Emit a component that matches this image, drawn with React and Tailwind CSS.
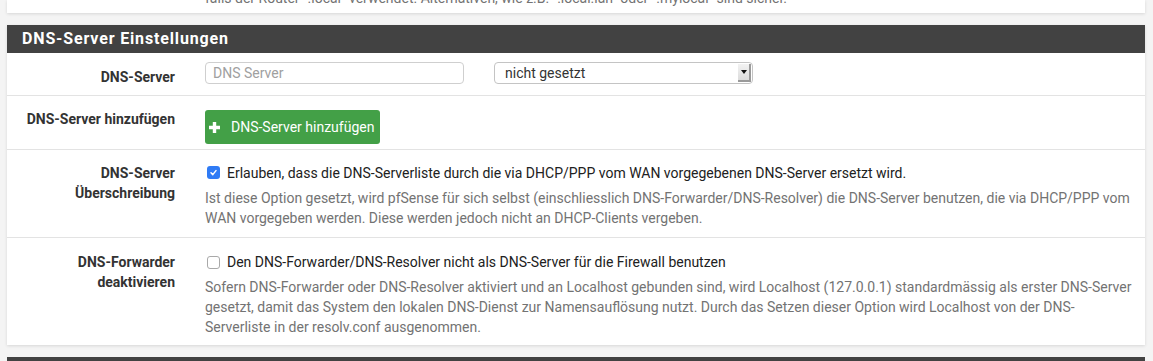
import React from "react";

const font = { fontFamily: "Roboto, 'Noto Sans', Arial, sans-serif" };

function Check({ checked }) {
  if (checked) {
    return (
      <span className="mt-[3px] flex h-[13px] w-[13px] shrink-0 items-center justify-center rounded-[3px] bg-[#2f7bf5]">
        <svg width="9" height="9" viewBox="0 0 9 9">
          <path d="M2 4.8 L3.8 6.6 L7 2.6" fill="none" stroke="#fff" strokeWidth="1.5" strokeLinecap="round" strokeLinejoin="round" />
        </svg>
      </span>
    );
  }
  return <span className="mt-[4px] block h-[13px] w-[13px] shrink-0 rounded-[3px] border border-[#a9a9a9] bg-white" />;
}

function Row({ label, children, className = "" }) {
  return (
    <div className={"flex border-b border-[#e3e3e3] " + className}>
      <div className="w-[183px] shrink-0 pr-[15px] text-right text-[14px] font-bold leading-[20px] text-[#333]">
        {label}
      </div>
      <div className="min-w-0 flex-1 pl-[15px] pr-[10px]">{children}</div>
    </div>
  );
}

export default function App() {
  return (
    <div className="h-[361px] w-[1153px] overflow-hidden bg-[#f4f4f4] pl-[7px] pr-[8px]" style={font}>
      {/* previous panel (cut) */}
      <div className="h-[13px] overflow-hidden bg-white shadow-[0_1px_3px_rgba(0,0,0,0.12)]">
        <div className="mt-[-12px] pl-[198px] text-[14px] leading-[20px] text-[#737373]">
          falls der Router ".local" verwendet. Alternativen, wie z.B. ".local.lan" oder ".mylocal" sind sicher.
        </div>
      </div>

      {/* DNS panel */}
      <div className="mt-[12px] bg-white shadow-[0_1px_3px_rgba(0,0,0,0.12)]">
        <div className="flex h-[28px] items-center bg-[#424242] pl-[15px] text-[16px] font-bold tracking-[0.85px] text-white">
          DNS-Server Einstellungen
        </div>

        <Row label="DNS-Server" className="h-[43px] pt-[14px]">
          <div className="mt-[-5px] flex gap-[30px]">
            <div className="flex h-[22px] w-[259px] items-center rounded-[4px] border border-[#cfcfcf] bg-white pl-[7px] text-[14px] text-[#a0a0a0]">
              DNS Server
            </div>
            <div className="flex h-[22px] w-[259px] items-center rounded-[4px] border border-[#c4c4c4] bg-white pl-[10px] pr-[1px] text-[14px] text-[#333]">
              <span className="flex-1">nicht gesetzt</span>
              <span className="flex h-[18px] w-[13px] items-center justify-center border-b-2 border-r-2 border-[#9a9a9a] bg-gradient-to-b from-[#f2f2f2] to-[#dcdcdc]">
                <svg width="6" height="4" viewBox="0 0 6 4"><path d="M0 0 H6 L3 4 Z" fill="#111" /></svg>
              </span>
            </div>
          </div>
        </Row>

        <Row label="DNS-Server hinzufügen" className="h-[54px] pt-[13px]">
          <div className="mt-[1px] flex h-[34px] w-[175px] items-center rounded-[3px] bg-[#43a047] pl-[4px] text-[14px] text-white">
            <svg width="11" height="11" viewBox="0 0 11 11" className="mr-[11px]">
              <path d="M5.5 0 V11 M0 5.5 H11" stroke="#fff" strokeWidth="3.4" />
            </svg>
            DNS-Server hinzufügen
          </div>
        </Row>

        <Row
          label={<>DNS-Server<br />Überschreibung</>}
          className="h-[88px] pt-[13px]"
        >
          <div className="flex gap-[7px] pl-[2px] text-[14px] leading-[20px] text-[#212121]">
            <Check checked />
            <span>Erlauben, dass die DNS-Serverliste durch die via DHCP/PPP vom WAN vorgegebenen DNS-Server ersetzt wird.</span>
          </div>
          <div className="mt-[5px] text-[14px] leading-[20px] text-[#737373]">
            <div>Ist diese Option gesetzt, wird pfSense für sich selbst (einschliesslich DNS-Forwarder/DNS-Resolver) die DNS-Server benutzen, die via DHCP/PPP vom</div>
            <div>WAN vorgegeben werden. Diese werden jedoch nicht an DHCP-Clients vergeben.</div>
          </div>
        </Row>

        <Row
          label={<>DNS-Forwarder<br />deaktivieren</>}
          className="h-[107px] border-b-0 pt-[14px]"
        >
          <div className="flex gap-[7px] pl-[2px] text-[14px] leading-[20px] text-[#212121]">
            <Check />
            <span>Den DNS-Forwarder/DNS-Resolver nicht als DNS-Server für die Firewall benutzen</span>
          </div>
          <div className="mt-[5px] text-[14px] leading-[20px] text-[#737373]">
            <div>Sofern DNS-Forwarder oder DNS-Resolver aktiviert und an Localhost gebunden sind, wird Localhost (127.0.0.1) standardmässig als erster DNS-Server</div>
            <div>gesetzt, damit das System den lokalen DNS-Dienst zur Namensauflösung nutzt. Durch das Setzen dieser Option wird Localhost von der DNS-</div>
            <div>Serverliste in der resolv.conf ausgenommen.</div>
          </div>
        </Row>
      </div>

      {/* next panel heading (cut) */}
      <div className="mt-[12px] h-[28px] bg-[#424242]" />
    </div>
  );
}
